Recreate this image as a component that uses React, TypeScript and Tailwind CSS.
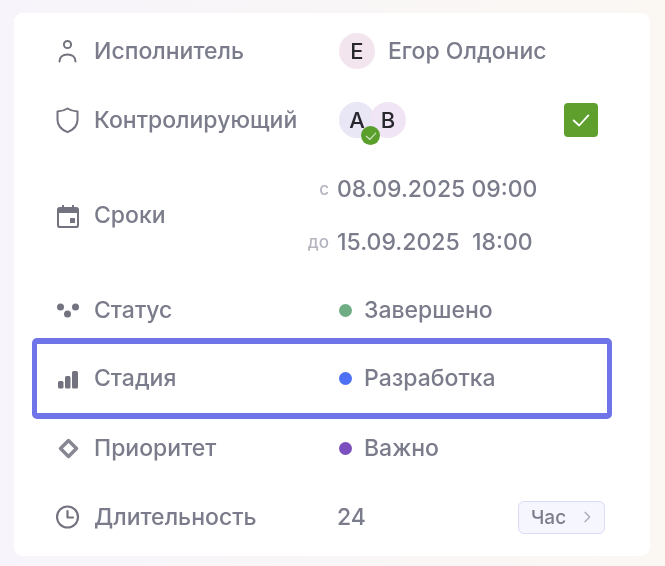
import type { ReactNode } from "react";

function PersonIcon() {
  return (
    <svg viewBox="0 0 24 24" className="h-6 w-6 text-[#72737f]" fill="none" stroke="currentColor" strokeWidth="2">
      <circle cx="11.500" cy="5.500" r="3.600" />
      <path d="M3.500 22.500c0-4.400 3.400-7 8-7s8 2.600 8 7" strokeLinecap="round" />
    </svg>
  );
}

function ShieldIcon() {
  return (
    <svg viewBox="0 0 24 28" className="h-7 w-6 text-[#72737f]" fill="none" stroke="currentColor" strokeWidth="2" strokeLinejoin="round">
      <path d="M11.500 2.500c2.800 1.800 6 2.700 10 3v8.500c0 5.600-3.800 9.600-10 12.200C5.300 23.600 1.500 19.600 1.500 14V5.500c4-.3 7.200-1.200 10-3Z" />
    </svg>
  );
}

function CalendarIcon() {
  return (
    <svg viewBox="0 0 24 24" className="h-6 w-6 text-[#72737f]" fill="currentColor">
      <path d="M6 1h2v2h8V1h2v2h2.200A2.800 2.800 0 0 1 23 5.800v15.400a2.800 2.800 0 0 1-2.800 2.800H3.800A2.800 2.800 0 0 1 1 21.200V5.800A2.800 2.800 0 0 1 3.800 3H6V1Zm-3 8v12.200c0 .4.400.8.800.8h16.400c.4 0 .8-.4.800-.8V9H3Z" />
      <rect x="14" y="14" width="5" height="5" rx="0.500" />
    </svg>
  );
}

function DotsIcon() {
  return (
    <svg viewBox="0 0 24 24" className="h-6 w-6 text-[#72737f]" fill="currentColor">
      <circle cx="4.500" cy="9" r="3.500" />
      <circle cx="19.500" cy="9" r="3.500" />
      <circle cx="11.500" cy="16" r="3.500" />
    </svg>
  );
}

function BarsIcon() {
  return (
    <svg viewBox="0 0 24 24" className="h-6 w-6 text-[#72737f]" fill="currentColor">
      <rect x="2" y="14" width="5.500" height="7.500" rx="1.500" />
      <rect x="9" y="9" width="5.500" height="12.500" rx="1.500" />
      <rect x="16" y="4" width="6" height="17.500" rx="1.500" />
    </svg>
  );
}

function DiamondIcon() {
  return (
    <svg viewBox="0 0 24 24" className="h-6 w-6 text-[#868793]" fill="none" stroke="currentColor" strokeWidth="3.500" strokeLinejoin="round">
      <path d="M12.500 4.500 20.500 12.500 12.500 20.500 4.500 12.500Z" />
    </svg>
  );
}

function ClockIcon() {
  return (
    <svg viewBox="0 0 24 24" className="h-6 w-6 text-[#72737f]" fill="none" stroke="currentColor" strokeWidth="2.200" strokeLinecap="round" strokeLinejoin="round">
      <circle cx="11.500" cy="12" r="10.500" />
      <path d="M11.500 6v6.500h5.500" />
    </svg>
  );
}

function CheckMark({ className }: { className: string }) {
  return (
    <svg viewBox="0 0 24 24" className={className} fill="none" stroke="white" strokeWidth="2" strokeLinecap="round" strokeLinejoin="round">
      <path d="M4 12.500 10 18 20 7" />
    </svg>
  );
}

function Label({ icon, text }: { icon: ReactNode; text: string }) {
  return (
    <div className="flex items-center">
      <div className="flex w-[38px] shrink-0 items-center">{icon}</div>
      <span>{text}</span>
    </div>
  );
}

function StatusValue({ color, text }: { color: string; text: string }) {
  return (
    <div className="flex items-center gap-3">
      <span className={`h-[13px] w-[13px] rounded-full ${color}`} />
      <span>{text}</span>
    </div>
  );
}

function Row({ label, children, className = "" }: { label: ReactNode; children?: ReactNode; className?: string }) {
  return (
    <div className={`flex items-center rounded-[5px] border-[5px] pl-[19px] ${className}`}>
      <div className="w-[283px] shrink-0">{label}</div>
      <div className="min-w-0 flex-1">{children}</div>
    </div>
  );
}

export default function App() {
  return (
    <div className="h-[566px] w-[665px] bg-gradient-to-r from-[#f7f5fb] to-[#fbf7f3] pl-[14px] pt-[13px] font-['Inter',sans-serif] text-[23px] font-medium leading-none text-[#7b7c8b] blur-[0.4px]">
      <div className="h-[543px] w-[636px] rounded-[9px] bg-white pl-[18px] pr-[38px] pt-[16px]">
        <Row className="h-[44px] border-transparent" label={<Label icon={<PersonIcon />} text="Исполнитель" />}>
          <div className="flex items-center gap-[13px]">
            <div className="flex h-9 w-9 items-center justify-center rounded-full bg-[#f2e5ed] text-[22px] text-[#26262c]">Е</div>
            <span>Егор Олдонис</span>
          </div>
        </Row>

        <Row className="mt-[25px] h-[44px] border-transparent" label={<Label icon={<ShieldIcon />} text="Контролирующий" />}>
          <div className="flex items-center justify-between pr-[9px]">
            <div className="relative flex text-[22px]">
              <div className="flex h-9 w-9 items-center justify-center rounded-full bg-[#e9e6f6] text-[#26262c]">А</div>
              <div className="-ml-[5px] flex h-9 w-9 items-center justify-center rounded-full bg-[#f0e5f4] text-[#26262c]">В</div>
              <div className="absolute left-[22px] top-[24px] flex h-[19px] w-[19px] items-center justify-center rounded-full bg-[#5a9e2c]">
                <CheckMark className="h-[14px] w-[14px] opacity-70" />
              </div>
            </div>
            <div className="flex h-[34px] w-[34px] items-center justify-center rounded-[4px] bg-[#5f9f2e]">
              <CheckMark className="h-[22px] w-[22px]" />
            </div>
          </div>
        </Row>

        <div className="mt-[25px] flex h-[97px] items-center border-[5px] border-transparent pl-[19px]">
          <div className="w-[210px] shrink-0">
            <Label icon={<CalendarIcon />} text="Сроки" />
          </div>
          <div className="grid grid-cols-[71px_auto] items-center gap-y-[30px]">
            <span className="pr-[8px] text-right text-[17px] text-[#b5b5c0]">с</span>
            <span>08.09.2025 09:00</span>
            <span className="pr-[8px] text-right text-[17px] text-[#b5b5c0]">до</span>
            <span className="whitespace-pre">15.09.2025  18:00</span>
          </div>
        </div>

        <Row className="mt-[24px] h-[44px] border-transparent" label={<Label icon={<DotsIcon />} text="Статус" />}>
          <StatusValue color="bg-[#6fae85]" text="Завершено" />
        </Row>

        <Row className="mt-[6px] h-[81px] border-y-[6px] border-[#6f75e8]" label={<Label icon={<BarsIcon />} text="Стадия" />}>
          <StatusValue color="bg-[#4d70f5]" text="Разработка" />
        </Row>

        <Row className="mt-[7px] h-[44px] border-transparent" label={<Label icon={<DiamondIcon />} text="Приоритет" />}>
          <StatusValue color="bg-[#7c4fbf]" text="Важно" />
        </Row>

        <Row className="mt-[25px] h-[44px] border-transparent" label={<Label icon={<ClockIcon />} text="Длительность" />}>
          <div className="flex items-center justify-between pr-[2px]">
            <span className="-ml-[2px]">24</span>
            <div className="flex h-[33px] w-[87px] items-center rounded-[6px] border border-[#dcdcf7] bg-[#f6f6fe] pl-[12px] text-[19px]">
              <span>Час</span>
              <svg viewBox="0 0 24 24" className="ml-[13px] h-4 w-4 text-[#a9a9b6]" fill="none" stroke="currentColor" strokeWidth="2" strokeLinecap="round" strokeLinejoin="round">
                <path d="m9 5 7 7-7 7" />
              </svg>
            </div>
          </div>
        </Row>
      </div>
    </div>
  );
}
